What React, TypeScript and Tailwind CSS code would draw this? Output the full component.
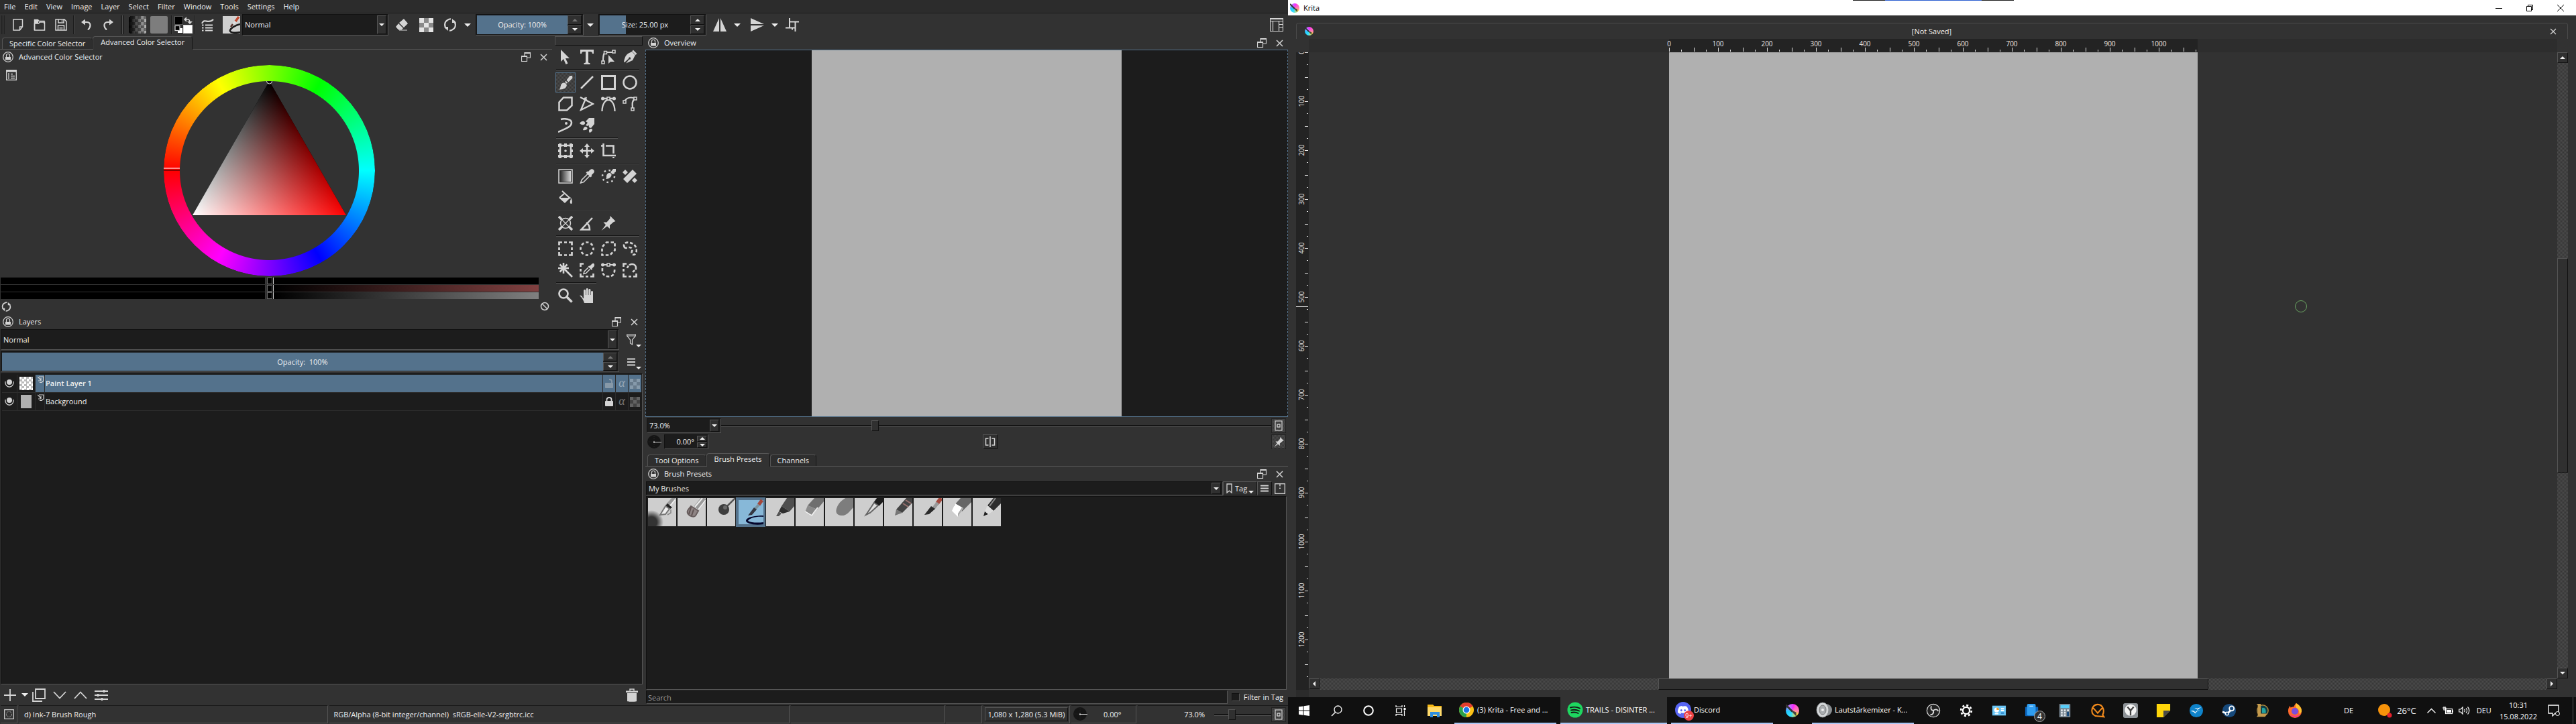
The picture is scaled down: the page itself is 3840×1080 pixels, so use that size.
import type { ReactNode } from "react";
import { SiDiscord } from "react-icons/si";

const cx = (...c: (string | false | undefined)[]) => c.filter(Boolean).join(" ");

const INSET = "border border-t-[#121212] border-l-[#121212] border-r-[#555] border-b-[#555] bg-[#1c1c1c]";
const RAISED = "border border-t-[#555] border-l-[#555] border-r-[#121212] border-b-[#121212] bg-[#303030]";
const HATCH = "bg-[repeating-conic-gradient(#4e4e4e_0_25%,#343434_0_50%)] bg-[length:2px_2px]";
const CHECKER = "bg-[repeating-conic-gradient(#8a8a8a_0_25%,#e4e4e4_0_50%)]";

type SvgProps = { w?: number; h?: number; box?: string; className?: string; children: ReactNode };

const Svg = ({ w = 22, h = w, box = `0 0 ${w} ${h}`, className, children }: SvgProps) => (
  <svg width={w} height={h} viewBox={box} className={cx("shrink-0", className)} fill="none" stroke="#d4d4d4" strokeWidth="2" aria-hidden="true">
    {children}
  </svg>
);

const fill = { fill: "#d4d4d4", stroke: "none" };

/* ---------- toolbox icons ---------- */

const brushShape = (
  <g {...fill}>
    <path d="M21 1h-3.500l-5 6.500 3 3L21.500 4.500z" />
    <path d="M11.500 8.800l2.700 2.700-1.500 1.300-2.600-2.600z" />
    <path d="M9 11.500c2 .2 3.800 2 3.800 4C12 20 7 21.500 1.500 21.500 4 20 3 17 4.500 14c1-1.800 2.600-2.700 4.500-2.500z" />
  </g>
);

const pinShape = <path {...fill} d="M13.500 0l8 8-3 1.200-5.500 4.800v5l-4-3.500-8.500 6.500 6.500-8.500-3.500-4h5l4.800-5.500z" />;

const pipette = (
  <g>
    <path {...fill} d="M21 1.500c1.500 2 .8 4-1 5.500l-2.300 2.200.8 1.200-2 2-7-7 2-2 1.200.8 2.200-2.200c1.800-1.800 4.300-2.300 6.100-.5z" />
    <path d="M12 7.500l-9 9-1.500 4.500 4.500-1.500 9-9" strokeWidth="1.500" />
  </g>
);

const node = (x: number, y: number) => <rect x={x} y={y} width="4" height="4" strokeWidth="1.500" fill="#323232" />;

const toolGroups: { name: string; icon: ReactNode }[][] = [
  [
    { name: "Select Shapes", icon: <path {...fill} d="M4 0v18l4-4 3.500 8 3-1.500-3.500-7.500h6z" /> },
    { name: "Text", icon: <path {...fill} d="M1 0h20v6h-2c0-2-1-3-3-3h-3v15.500c0 1 1 1.500 2.500 1.500v2h-9v-2C8 20 9 19.500 9 18.500V3H6C4 3 3 4 3 6H1z" /> },
    {
      name: "Edit Shapes",
      icon: (
        <>
          <path d="M3 17C3 11 3 5 7 4M9 4h8" />
          {node(1, 17)}
          {node(4.500, 2.500)}
          {node(17, 1)}
          <path {...fill} d="M11 8v13l3-3h6z" />
        </>
      ),
    },
    {
      name: "Calligraphy",
      icon: (
        <>
          <path {...fill} d="M14 3l5 5-4 8-10 4.500 5-6a1.600 1.600 0 1 0-1-1L3 19 2 18C3 12 5 8 8 6z" />
          <path d="M15 1.500l5.500 5.500" strokeWidth="2.500" />
        </>
      ),
    },
  ],
  [
    { name: "Freehand Brush", icon: brushShape },
    { name: "Line", icon: <path d="M2 20L20 2" strokeWidth="2.500" /> },
    { name: "Rectangle", icon: <rect x="1.500" y="1.500" width="19" height="19" strokeWidth="3" /> },
    { name: "Ellipse", icon: <circle cx="11" cy="11" r="9.500" strokeWidth="2.500" /> },
    { name: "Polygon", icon: <path d="M8 1.500h12.500v12L13 20.500H1.500v-12z" strokeWidth="2.500" /> },
    { name: "Polyline", icon: <path d="M1 1l19 10L2 20 10 1M7 2l4 4" strokeWidth="2.300" /> },
    {
      name: "Bezier Curve",
      icon: (
        <>
          <path d="M1.500 22C1.500 12 6 5 11 5s9.500 7 9.500 17M3 3h16" strokeWidth="2.300" />
          <circle {...fill} cx="2.500" cy="3" r="2.500" />
          <circle {...fill} cx="19.500" cy="3" r="2.500" />
          {node(9, 1)}
        </>
      ),
    },
    {
      name: "Freehand Path",
      icon: (
        <>
          <path d="M3 7C6 2 12 0 19 3 13 7 15 12 15 18" strokeWidth="2.300" />
          {node(1, 6)}
          {node(17, 1)}
          {node(13, 17)}
        </>
      ),
    },
    {
      name: "Dynamic Brush",
      icon: (
        <>
          <path d="M4 2c5-1.500 16-1 16 5 0 7-11 9-20 14" strokeWidth="2.500" />
          <circle {...fill} cx="12" cy="8" r="2" />
        </>
      ),
    },
    {
      name: "Multibrush",
      icon: (
        <>
          <path {...fill} d="M22 0h-8L9 5l3 2-3 4 3 1 1.500-1.500L14 14l3 1 5-6z" />
          <path {...fill} d="M0 8c3-4 7-4 8-1s-4 5-8 1zM5 18c1-5 4-6 6-4s-1 5-6 4zM15 22c-2-3-1-6 2-6s3 4-2 6z" />
        </>
      ),
    },
  ],
  [
    {
      name: "Transform",
      icon: (
        <>
          <rect x="3" y="3" width="16" height="16" strokeWidth="2.500" />
          <g {...fill}>
            <path d="M0 1h5v4H0zM17 1h5v4h-5zM0 17h5v4H0zM17 17h5v4h-5zM9 0h4v5H9zM9 17h4v5H9zM0 9h4v4H0zM18 9h4v4h-4zM1 0h4v2H1zM17 0h4v2h-4zM1 20h4v2H1zM17 20h4v2h-4z" />
            <circle cx="11" cy="11" r="1.800" />
          </g>
        </>
      ),
    },
    {
      name: "Move",
      icon: (
        <>
          <path d="M11 2v18M2 11h18" strokeWidth="2.500" />
          <path {...fill} d="M11 0l4 5H7zM11 22l4-5H7zM0 11l5-4v8zM22 11l-5-4v8z" />
        </>
      ),
    },
    { name: "Crop", icon: <path d="M0 3.500h3M3.500 0v18H22M7 3.500h11.500V15M18.500 20v2" strokeWidth="2.600" /> },
  ],
  [
    {
      name: "Gradient",
      icon: (
        <>
          <defs>
            <linearGradient id="toolGrad">
              <stop stopColor="#2a2a2a" />
              <stop offset="1" stopColor="#d8d8d8" />
            </linearGradient>
          </defs>
          <rect x="1" y="1" width="20" height="20" strokeWidth="1.500" />
          <rect x="3" y="3" width="16" height="16" fill="url(#toolGrad)" stroke="none" />
        </>
      ),
    },
    { name: "Color Sampler", icon: pipette },
    {
      name: "Colorize Mask",
      icon: (
        <>
          <path {...fill} d="M22 0h-4l-4 5 3 3 5-4zM13 6c3 1 3 3 2 5-2 3-5 4-8 4 2-2 0-4 2-7 1-1.500 2-2 4-2z" />
          <circle cx="11" cy="11" r="9" strokeWidth="2.500" strokeDasharray="2.500 4.600" />
        </>
      ),
    },
    { name: "Smart Patch", icon: <path {...fill} d="M15 1l6 6L7 21l-6-6zM4 1l4 4-4 4-4-4zM18 13l4 4-4 4-4-4z" /> },
    {
      name: "Fill",
      icon: (
        <>
          <path d="M6 1l12 11M2 11l8-7" strokeWidth="2" />
          <path {...fill} d="M1 11h17l-8 8zM18 10c3 2 4 10 1.500 10S17.500 16 19 13z" />
        </>
      ),
    },
  ],
  [
    {
      name: "Assistants",
      icon: (
        <>
          <circle cx="11" cy="11" r="7.500" strokeWidth="1.500" />
          <path d="M5 5l12 12M17 5L5 17" strokeWidth="1.200" />
          <path d="M1 1l5 5M21 1l-5 5M1 21l5-5M21 21l-5-5" strokeWidth="3.500" />
        </>
      ),
    },
    { name: "Measure", icon: <path d="M19 3L2.500 20.500H15C15 15 13 12 10 10" strokeWidth="2.500" /> },
    { name: "Reference Images", icon: pinShape },
  ],
  [
    { name: "Rectangular Selection", icon: <path d="M1.500 6V1.500H6M9 1.500h4M16 1.500h4.500V6M20.500 9v4M20.500 16v4.500H16M13 20.500H9M6 20.500H1.500V16M1.500 13V9" strokeWidth="2.700" /> },
    { name: "Elliptical Selection", icon: <circle cx="11" cy="11" r="9.500" strokeWidth="2.700" strokeDasharray="4.200 3.260" strokeDashoffset="2" /> },
    { name: "Polygonal Selection", icon: <path d="M8 1.500h12.500v12L13 20.500H1.500v-12z" strokeWidth="2.700" strokeDasharray="4.500 3" strokeDashoffset="1" /> },
    { name: "Freehand Selection", icon: <path d="M3 9C-1 2 8 0 14 3c7 3 8 11 6 14-2 5-8 3-6-2 1-3 0-6-4-6-2 0-6 2-7 0z" strokeWidth="2.700" strokeDasharray="4.500 2.700" /> },
    { name: "Contiguous Selection", icon: <path d="M8 0v16M0 8h16M2.500 2.500l11 11M13.500 2.500l-11 11M10 10l11 11" strokeWidth="2.600" /> },
    {
      name: "Similar Color Selection",
      icon: (
        <>
          <path d="M1.500 6V1.500H6M1.500 13V9M6 20.500H1.500V16M13 20.500H9M16 20.500h4.500V16" strokeWidth="2.700" />
          <path {...fill} d="M21 1c2 2 1 4-.5 5.500l-2 2 .7.8-1.500 1.500-5-5L14.200 4.300l.8.7 2-2c1.500-1.500 2.800-3 4-2z" />
          <path d="M13 7l-6 6-1 3.500 3.500-1 6-6" strokeWidth="1.500" />
        </>
      ),
    },
    {
      name: "Bezier Curve Selection",
      icon: (
        <>
          <path d="M3 3h16" strokeWidth="2" />
          <circle {...fill} cx="2.500" cy="3" r="2.500" />
          <circle {...fill} cx="19.500" cy="3" r="2.500" />
          {node(9, 1)}
          <path d="M2 8c-1 9 3 12.500 9 12.500S21 17 20 8" strokeWidth="2.700" strokeDasharray="4.500 2.800" />
        </>
      ),
    },
    {
      name: "Magnetic Selection",
      icon: (
        <>
          <path d="M6 1.500H1.500V6M1.500 9v4M1.500 16v4.500H6M9 20.500h4M16 20.500h4.500V16" strokeWidth="2.700" />
          <path d="M7 8c2-8 13-8 13 0 0 4-5 4-6 8" strokeWidth="2.600" strokeDasharray="4 1.500 16 1.500 4" />
        </>
      ),
    },
  ],
  [
    {
      name: "Zoom",
      icon: (
        <>
          <circle cx="8" cy="8" r="6.500" strokeWidth="2.700" />
          <path d="M12.500 12.500l8 8" strokeWidth="3.500" />
        </>
      ),
    },
    {
      name: "Pan",
      icon: (
        <path
          {...fill}
          d="M0 11c2-1 4 0 5 4h1V3.500c0-2 3-2 3 0V10h.7V1.500c0-2 3-2 3 0V10h.7V2.500c0-2 3-2 3 0V10h.6V5.500c0-2 3-2 3 0V22H7c-1-4-4-9-7-11z"
        />
      ),
    },
  ],
];

const Toolbox = () => (
  <div className="flex w-[131px] shrink-0 flex-col">
    <div className="mb-px h-3.5 border border-t-[#555] border-l-[#555] border-r-[#121212] border-b-[#121212]" />
    {toolGroups.map((group, g) => (
      <div key={g}>
        {g > 0 && (
          <div className="flex h-1.5 items-center pl-0.5">
            <div
              className={cx(
                "h-0.5 border-t border-b border-t-[#141414] border-b-[#555]",
                group.length === 2 ? "w-[60px]" : group.length === 3 ? "w-[92px]" : "w-[124px]"
              )}
            />
          </div>
        )}
        <div className="flex w-32 flex-wrap">
          {group.map((t) => (
            <button key={t.name} aria-label={t.name} className="flex size-8 items-center justify-center">
              <span className={cx("flex size-[30px] items-center justify-center", t.name === "Freehand Brush" && `border border-[#54728c] ${HATCH}`)}>
                <Svg>{t.icon}</Svg>
              </span>
            </button>
          ))}
        </div>
      </div>
    ))}
  </div>
);

/* ---------- shared widgets ---------- */

const Tri = ({ up, dim, small }: { up?: boolean; dim?: boolean; small?: boolean }) => (
  <svg width={small ? 8 : 10} height={small ? 4 : 5} viewBox="0 0 10 5" className="shrink-0" fill={dim ? "#777" : "#eee"} aria-hidden="true">
    <path d={up ? "M0 5L5 0l5 5z" : "M0 0h10L5 5z"} />
  </svg>
);

const Spin = ({ dimUp, className }: { dimUp?: boolean; className?: string }) => (
  <span className={cx("flex shrink-0 flex-col gap-px bg-[#1c1c1c]", className)}>
    <button aria-label="Increase" className={cx("flex flex-1 items-center justify-center", RAISED)}>
      <Tri up small dim={dimUp} />
    </button>
    <button aria-label="Decrease" className={cx("flex flex-1 items-center justify-center", RAISED)}>
      <Tri small />
    </button>
  </span>
);

const Combo = ({ label, value, className }: { label: string; value: string; className?: string }) => (
  <label className={cx("flex p-px pr-0.5", INSET, className)}>
    <select aria-label={label} className="min-w-0 flex-1 appearance-none bg-transparent pl-0.5 outline-none">
      <option>{value}</option>
    </select>
    <span className={cx("flex w-3.5 items-center justify-center", RAISED)}>
      <Tri small />
    </span>
  </label>
);

const FillSlider = ({ label, value, fillClass, dimUp, className }: { label: string; value: string; fillClass: string; dimUp?: boolean; className?: string }) => (
  <label className={cx("flex p-px pr-0.5", INSET, className)}>
    <input aria-label={label} readOnly value={value} className={cx("min-w-0 flex-1 text-center outline-none", fillClass)} />
    <Spin dimUp={dimUp} className="w-[21px]" />
  </label>
);

const THUMB =
  "appearance-none bg-transparent [&::-webkit-slider-runnable-track]:h-4 [&::-webkit-slider-runnable-track]:bg-[linear-gradient(#141414,#141414),linear-gradient(#555,#555)] [&::-webkit-slider-runnable-track]:bg-[length:100%_2px,100%_1px] [&::-webkit-slider-runnable-track]:bg-[position:0_7px,0_9px] [&::-webkit-slider-runnable-track]:bg-no-repeat [&::-webkit-slider-thumb]:h-4 [&::-webkit-slider-thumb]:w-[11px] [&::-webkit-slider-thumb]:appearance-none [&::-webkit-slider-thumb]:border [&::-webkit-slider-thumb]:border-[#555] [&::-webkit-slider-thumb]:border-r-[#121212] [&::-webkit-slider-thumb]:border-b-[#121212] [&::-webkit-slider-thumb]:bg-[#303030]";

const DockTitle = ({ title }: { title: string }) => (
  <div className="flex h-5 shrink-0 items-center pr-[7px] pl-1">
    <Svg w={16}>
      <circle cx="8" cy="8" r="7.300" strokeWidth="1.200" />
      <path d="M5.500 8V5.500c0-3 5-3 5 0V8" strokeWidth="1.200" />
      <rect {...fill} x="4" y="8" width="8" height="4.500" />
    </Svg>
    <h2 className="ml-2 flex-1">{title}</h2>
    <button aria-label={`Float ${title}`}>
      <Svg w={14}>
        <path d="M5 5V.5h8.500V8H9M5 1.500h8" strokeWidth="1.200" />
        <path d="M.5 5.500h8v8h-8zM.5 6.500h8" strokeWidth="1.200" />
      </Svg>
    </button>
    <button aria-label={`Close ${title}`} className="ml-3.5">
      <Svg w={11}>
        <path d="M1 1l9 9M10 1l-9 9" strokeWidth="1.500" />
      </Svg>
    </button>
  </div>
);

const Tabs = ({ tabs, active }: { tabs: string[]; active: string }) => (
  <div className="mb-px flex h-5 shrink-0 items-end border-b border-[#555] pl-[3px]">
    {tabs.map((t) => (
      <button
        key={t}
        className={cx(
          "rounded-t-sm border border-b-0 border-t-[#555] border-l-[#555] border-r-[#151515]",
          t === active ? "-mb-px h-5 bg-[#323232] px-[11px] pb-1" : "h-[17px] bg-[#2e2e2e] px-[10px]"
        )}
      >
        {t}
      </button>
    ))}
  </div>
);

const Fit = () => (
  <Svg w={12} h={16}>
    <rect x="1" y="1" width="10" height="14" strokeWidth="1.200" />
    <rect x="4" y="6" width="4" height="4" strokeWidth="1.300" />
  </Svg>
);

const Dial = () => (
  <Svg w={21}>
    <circle cx="10" cy="10" r="10" fill="#151515" stroke="none" />
    <path d="M10 2v16M2 10h8" stroke="#333" strokeWidth="1" strokeDasharray="1 2" />
    <path d="M9 10.500h12M10 9v3" strokeWidth="1" />
  </Svg>
);

/* ---------- top bars ---------- */

const menus = ["File", "Edit", "View", "Image", "Layer", "Select", "Filter", "Window", "Tools", "Settings", "Help"];

const Handle = ({ className }: { className?: string }) => (
  <div className={cx("h-7 w-[5px] shrink-0 border-x-2 border-[#222] bg-[#505050]", className)} />
);
const Sep = ({ className }: { className?: string }) => (
  <div className={cx("h-7 w-0.5 shrink-0 border-r border-l border-l-[#1a1a1a] border-r-[#444]", className)} />
);
const Tool = ({ name, className = "w-8", children }: { name: string; className?: string; children: ReactNode }) => (
  <button aria-label={name} className={cx("flex h-8 shrink-0 items-center justify-center", className)}>
    {children}
  </button>
);

const ReloadIcon = ({ w = 20 }: { w?: number }) => (
  <Svg w={w} box="0 0 20 20">
    <path d="M6 3C1 6 1 13 5 16M14 17c5-3 5-10 1-13M11 1.500C8 1 6 3 5 4M9 18.500c3 .5 5-1.500 6-2.500" strokeWidth="2.200" />
    <path {...fill} d="M1 13h6v6zM19 7h-6V1z" />
  </Svg>
);

const Toolbar = () => (
  <div className="flex h-[34px] shrink-0 items-center pl-0.5">
    <Handle />
    <Tool name="New" className="ml-1 w-8">
      <Svg w={16} h={18}>
        <path d="M1 1h13.500v11l-4 5H1zM10.500 17v-5h4" strokeWidth="1.500" />
      </Svg>
    </Tool>
    <Tool name="Open">
      <Svg w={18} h={18}>
        <path d="M1.500 17V1.500h5l1.500 2h8V8" strokeWidth="1.500" />
        <path d="M1.500 17V7h6l2-2h7v12z" strokeWidth="1.500" />
        <path {...fill} d="M1 1h6v6H1z" />
      </Svg>
    </Tool>
    <Tool name="Save">
      <Svg w={18}>
        <path d="M1 1h13l3 3v13H1zM4.500 17v-7h9v7M5 1v5h8V1" strokeWidth="1.500" />
        <path d="M10.500 2v3M6.500 12.500h5M6.500 15h5" strokeWidth="1.200" />
      </Svg>
    </Tool>
    <Sep className="ml-0.5" />
    <Tool name="Undo" className="ml-0.5 w-8">
      <Svg w={16}>
        <path d="M2 4h6c7 0 7 7 2 11.500" strokeWidth="2.200" />
        <path {...fill} d="M0 4l6-4.500v9z" />
      </Svg>
    </Tool>
    <Tool name="Redo">
      <Svg w={16}>
        <path d="M14 4H8C1 4 1 11 6 15.500" strokeWidth="2.200" />
        <path {...fill} d="M16 4L10-.5v9z" />
      </Svg>
    </Tool>
    <Handle className="ml-[3px]" />
    <button aria-label="Gradients" className={cx("ml-[7px] size-[26px] shrink-0 overflow-hidden rounded-xs bg-[length:9px_9px]", CHECKER)}>
      <span className="block size-full bg-linear-to-r from-black to-black/20" />
    </button>
    <button aria-label="Patterns" className="ml-1.5 size-[26px] shrink-0 rounded-xs bg-[#7d7d7d]" />
    <Sep className="ml-[5px]" />
    <button aria-label="Foreground and background color" className="ml-[3px]">
      <Svg w={27} h={26}>
        <rect x="13.500" y="13.500" width="13" height="12" fill="#fff" strokeWidth="1" />
        <rect x=".5" y=".5" width="12" height="12" fill="#000" stroke="#555" strokeWidth="1" />
        <rect x="5" y="18" width="7" height="7" fill="#fff" stroke="none" />
        <rect x="1" y="14.500" width="7" height="7" fill="#000" strokeWidth="1.200" />
        <path d="M16 5h4c2 0 3 1 3 5" strokeWidth="1.500" />
        <path {...fill} d="M14 5l4-4v8zM23 12l-4-4h8z" />
      </Svg>
    </button>
    <Sep className="ml-0.5" />
    <Tool name="Edit brush settings" className="ml-[3px] w-8">
      <Svg w={20} h={19}>
        <path d="M1 7c4-9 9 2 17-6" strokeWidth="2.200" />
        <path d="M1 9.500h2.500M6 9.500h11M1 13.500h2.500M6 13.500h11M1 17.500h2.500M6 17.500h11" strokeWidth="2" />
      </Svg>
    </Tool>
    <button aria-label="Choose brush preset" className="ml-1.5 shrink-0 bg-[#cfcfcf]">
      <Svg w={26}>
        <path d="M26 12c-8 2-14 6-15 9s5 5 15 3" stroke="#1b1b1b" strokeWidth="2.500" />
        <path d="M24 1l-5 7" stroke="#c0492f" strokeWidth="3.500" />
        <path d="M19 8l-4 5" stroke="#ddd" strokeWidth="3" />
        <path d="M15 12l-3 4" stroke="#553028" strokeWidth="2.500" />
      </Svg>
    </button>
    <Combo label="Blending mode" value="Normal" className="ml-[3px] h-8 w-[218px] shrink-0" />
    <Tool name="Eraser mode" className="ml-0.5 w-9">
      <Svg w={20} h={18}>
        <path {...fill} d="M13 0l6 7-6 6-7-7zM5 7l7 7-2.500 2.500H5L1 12z" />
        <path d="M6 17h12" strokeWidth="1" />
      </Svg>
    </Tool>
    <Tool name="Preserve alpha" className="w-9">
      <span className={cx("size-[21px] bg-[length:14px_14px]", CHECKER)} />
    </Tool>
    <Tool name="Reload preset" className="w-9">
      <ReloadIcon />
    </Tool>
    <Tool name="Presets menu" className="w-4">
      <Tri />
    </Tool>
    <FillSlider label="Brush opacity" value="Opacity: 100%" dimUp fillClass="bg-[#54728c]" className="ml-1 h-8 w-[161px] shrink-0" />
    <Tool name="Opacity menu" className="w-5">
      <Tri />
    </Tool>
    <FillSlider
      label="Brush size"
      value="Size: 25.00 px"
      fillClass="bg-[linear-gradient(90deg,#54728c_29%,#1c1c1c_29%)]"
      className="ml-0.5 h-8 w-[161px] shrink-0"
    />
    <Tool name="Horizontal mirror" className="w-10">
      <Svg w={20}>
        <path {...fill} d="M9 0v20H0zM11 0l9 20h-9z" />
      </Svg>
    </Tool>
    <Tool name="Horizontal mirror menu" className="w-3">
      <Tri />
    </Tool>
    <Tool name="Vertical mirror" className="ml-1.5 w-9">
      <Svg w={20}>
        <path {...fill} d="M0 0l20 9H0zM0 11h20L0 20z" />
      </Svg>
    </Tool>
    <Tool name="Vertical mirror menu" className="ml-0.5 w-3">
      <Tri />
    </Tool>
    <Tool name="Wrap around" className="w-10">
      <Svg w={20}>
        <path d="M6 0v14.500M0 14.500h10M10 14.500v3M6 5.500h14M14.500 5.500V20M10 14.500h4" strokeWidth="2" />
      </Svg>
    </Tool>
    <Tool name="Choose workspace" className="mr-[7px] ml-auto w-5">
      <Svg w={20}>
        <path d="M.5 1h19v18.500H.5zM.5 4.500h19M4.500 4.500v15M13.500 4.500v15M13.500 9.500h6M13.500 14.500h6" strokeWidth="1.200" />
        <path {...fill} d="M0 0h20v2H0z" />
      </Svg>
    </Tool>
  </div>
);

/* ---------- color selector ---------- */

const shades = ["bg-black", "bg-[linear-gradient(90deg,#000_51%,#804040)]", "bg-[linear-gradient(90deg,#000_51%,#808080)]"];

const ColorSelector = () => (
  <section className="flex min-w-0 flex-1 flex-col">
    <Tabs tabs={["Specific Color Selector", "Advanced Color Selector"]} active="Advanced Color Selector" />
    <DockTitle title="Advanced Color Selector" />
    <div className="mr-5 grid grid-cols-[1fr_auto_1fr] pt-0.5">
      <button aria-label="Color selector settings" className="mt-[7px] ml-[9px] self-start justify-self-start">
        <Svg w={16}>
          <rect x=".7" y=".7" width="14.600" height="14.600" strokeWidth="1.300" />
          <path d="M1 2h14" strokeWidth="2.500" />
          <path d="M4 5v9M7 6.500h3M7 9.500h6M7 12.500h6" strokeWidth="1.300" />
        </Svg>
      </button>
      <div className="grid size-[315px]">
        <div className="col-start-1 row-start-1 rounded-full bg-[conic-gradient(from_270deg,#f00,#ff0,#0f0,#0ff,#00f,#f0f,#f00)] mask-[radial-gradient(circle,transparent_133px,#000_134px)]" />
        <svg viewBox="0 0 315 315" className="isolate col-start-1 row-start-1" aria-hidden="true">
          <defs>
            <linearGradient id="redUp" x1="0" y1="24" x2="0" y2="224" gradientUnits="userSpaceOnUse">
              <stop stopColor="#000" />
              <stop offset="1" stopColor="#f00" />
            </linearGradient>
            <linearGradient id="whiteIn" x1="43" y1="224" x2="215" y2="124" gradientUnits="userSpaceOnUse">
              <stop stopColor="#0ff" />
              <stop offset="1" stopColor="#000" />
            </linearGradient>
          </defs>
          <path d="M157.500 24L272 224H43z" fill="url(#redUp)" />
          <path d="M157.500 24L272 224H43z" fill="url(#whiteIn)" className="mix-blend-screen" />
          <path d="M153.500 24a4 4 0 0 0 8 0" stroke="#ddd" fill="#111" />
          <path d="M0 154h24" stroke="#ff8c8c" strokeWidth="2" />
          <path d="M0 157h24" stroke="#8c0000" strokeWidth="2" />
        </svg>
      </div>
    </div>
    <div className="mt-0.5 mr-5 ml-px flex flex-col gap-px">
      {shades.map((s) => (
        <div key={s} className={cx("flex h-2.5 justify-center", s)}>
          <span className="w-3 border-x border-[#ccc] px-px">
            <span className="block h-full border border-[#666]" />
          </span>
        </div>
      ))}
    </div>
    <div className="mt-1 flex h-5 items-start justify-between pr-1 pl-0.5">
      <button aria-label="Reload colors">
        <ReloadIcon w={15} />
      </button>
      <button aria-label="Clear color history">
        <Svg w={14}>
          <circle cx="7" cy="7" r="5.500" strokeWidth="1.500" />
          <path d="M3 3l8 8" strokeWidth="1.500" />
        </Svg>
      </button>
    </div>
  </section>
);

/* ---------- layers ---------- */

const layers = [
  { name: "Paint Layer 1", selected: true, locked: false },
  { name: "Background", selected: false, locked: true },
];

const Layers = () => (
  <section className="flex min-h-0 flex-1 flex-col">
    <DockTitle title="Layers" />
    <div className="mt-px flex pl-px">
      <Combo label="Layer blending mode" value="Normal" className="h-[31px] flex-1" />
      <button aria-label="Filter layers" className="flex w-[35px] items-center justify-end pr-0.5">
        <Svg w={14} h={18}>
          <path d="M.7 1h12.600v2L8.500 9v7l-3-2V9L.7 3zM1 3h12" strokeWidth="1.200" />
        </Svg>
        <span className="self-end pb-1">
          <Tri small />
        </span>
      </button>
    </div>
    <div className="mt-0.5 flex pl-px">
      <FillSlider label="Layer opacity" value="Opacity:  100%" dimUp fillClass="bg-[#54728c]" className="h-[31px] flex-1" />
      <button aria-label="Layer options" className="flex w-[35px] items-center justify-end pr-0.5">
        <Svg w={14} h={12}>
          <path d="M1 1.500h12M1 6h12M1 10.500h12" />
        </Svg>
        <span className="self-end pb-1">
          <Tri small />
        </span>
      </button>
    </div>
    <ul className={cx("mt-0.5 ml-px flex-1 p-px", INSET)}>
      {layers.map((l) => (
        <li key={l.name} className="flex h-[27px] items-stretch border-b border-[#2c2c2c]">
          <span className="flex w-[23px] items-center justify-center border-r border-[#2c2c2c]">
            <Svg w={14}>
              <path d="M1 4c-1 11 13 11 12 0" strokeWidth="1.300" />
              <circle {...fill} cx="7" cy="5" r="4" />
            </Svg>
          </span>
          <span className="flex w-[27px] items-center justify-center border-r border-[#2c2c2c]">
            <span className={cx("h-5", l.selected ? "w-5 bg-[repeating-conic-gradient(#bbb_0_25%,#fff_0_50%)] bg-[length:7px_7px]" : "w-4 bg-[#b0b0b0]")} />
          </span>
          <span className={cx("flex flex-1 items-center", l.selected && "bg-[#54728c]")}>
            <span className="h-full w-3.5 border-r border-[#2c2c2c] pt-0.5 pl-[3px]">
              <Svg w={10}>
                <path d="M2 1h7v6L6 9.500H3M0 1l5 5M5 3v4H1" strokeWidth="1.200" />
              </Svg>
            </span>
            <span className={cx("flex-1 pl-px", l.selected && "font-semibold")}>{l.name}</span>
            <button aria-label={`Lock ${l.name}`} className="flex h-full w-[19px] items-center justify-center border-l border-[#2c2c2c]">
              <Svg w={12} h={14} className={l.locked ? "" : "opacity-40"}>
                <rect {...fill} x="0" y="6" width="12" height="8" rx="1" />
                <path d={l.locked ? "M2.500 7V4c0-4 7-4 7 0v3" : "M10 7V4C10 1 8 1 6 1"} strokeWidth="1.800" />
              </Svg>
            </button>
            <button aria-label={`Inherit alpha ${l.name}`} className="h-full w-[19px] border-l border-[#2c2c2c] font-serif text-lg/6 text-white/40 italic">
              α
            </button>
            <button aria-label={`Alpha lock ${l.name}`} className="flex h-full w-5 items-center justify-center border-l border-[#2c2c2c]">
              <span className={cx("size-[15px] bg-[length:10px_10px] opacity-35", CHECKER)} />
            </button>
          </span>
        </li>
      ))}
    </ul>
    <div className="flex h-[31px] shrink-0 items-center gap-[11px] pr-[7px] pl-1.5">
      <div className="flex items-center gap-1.5">
        <button aria-label="Add layer" className="flex items-center gap-2">
          <Svg w={18}>
            <path d="M9 0v18M0 9h18" strokeWidth="1.800" />
          </Svg>
          <Tri />
        </button>
        <button aria-label="Duplicate layer">
          <Svg w={20}>
            <path d="M5 1h14v14H5zM1 5v14h14" strokeWidth="1.800" />
          </Svg>
        </button>
      </div>
      <button aria-label="Move layer down">
        <Svg w={20} h={12}>
          <path d="M1 1l9 9.500L19 1" strokeWidth="1.800" />
        </Svg>
      </button>
      <button aria-label="Move layer up">
        <Svg w={20} h={12}>
          <path d="M1 11l9-9.500L19 11" strokeWidth="1.800" />
        </Svg>
      </button>
      <button aria-label="Layer properties">
        <Svg w={20} h={16}>
          <path d="M0 2h20M0 8h20M0 14h20" strokeWidth="1.800" />
          <path d="M14 0v4M5 6v4M11 12v4" strokeWidth="2.500" />
        </Svg>
      </button>
      <button aria-label="Delete layer" className="ml-auto">
        <Svg w={18} h={20}>
          <path {...fill} d="M2 7h14v12c0 1-14 1-14 0zM0 3.500h18V6H0z" />
          <path d="M6 3.500V1h6v2.500" strokeWidth="1.500" />
        </Svg>
      </button>
    </div>
  </section>
);

/* ---------- overview ---------- */

const Overview = () => (
  <section className="flex flex-col">
    <DockTitle title="Overview" />
    <div className="flex h-[548px] justify-center border border-dashed border-[#54728c] bg-[#1c1c1c] [border-bottom-style:solid] [border-top-style:solid]">
      <div className="w-[462px] bg-[#b0b0b0]" />
    </div>
    <div className="mt-0.5 flex h-[22px] items-center pr-[3px] pl-0.5">
      <Combo label="Overview zoom" value="73.0%" className="h-[22px] w-[111px] shrink-0" />
      <input type="range" aria-label="Overview zoom level" min="0" max="1000" defaultValue="277" className={cx("h-4 min-w-0 flex-1", THUMB)} />
      <button aria-label="Fit page" className={cx("flex size-[22px] items-center justify-center border border-[#222]", HATCH)}>
        <Fit />
      </button>
    </div>
    <div className="mt-0.5 flex h-[22px] items-center pr-[3px] pl-[3px]">
      <Dial />
      <label className={cx("ml-1 flex h-[22px] w-[66px] p-px", INSET)}>
        <input aria-label="Rotation" readOnly value="0.00°" className="min-w-0 flex-1 bg-transparent text-right outline-none" />
        <Spin className="ml-1 w-[15px]" />
      </label>
      <button aria-label="Mirror view" className={cx("mx-auto flex size-[22px] items-center justify-center", RAISED)}>
        <Svg w={16}>
          <path d="M8 0v16M5.500 3H1.500v10h4M10.500 3h4v10h-4" strokeWidth="1.500" />
        </Svg>
      </button>
      <button aria-label="Pin overview controls" className={cx("flex size-[22px] items-center justify-center border border-[#222]", HATCH)}>
        <Svg w={15} box="0 0 22 22">
          {pinShape}
        </Svg>
      </button>
    </div>
  </section>
);

/* ---------- brush presets ---------- */

const presets: { name: string; art: ReactNode }[] = [
  {
    name: "Airbrush Soft",
    art: (
      <>
        <defs>
          <radialGradient id="softDot">
            <stop offset=".45" stopColor="#333" />
            <stop offset="1" stopColor="#333" stopOpacity="0" />
          </radialGradient>
        </defs>
        <circle cx="5" cy="36" r="18" fill="url(#softDot)" />
        <path d="M40 0L28 13" stroke="#999" strokeWidth="7" />
        <path d="M41 2L30 15" stroke="#eee" strokeWidth="2" />
        <path d="M29 8l7 6-6 4-5-5z" fill="#222" />
        <path d="M26 12l6 4-6 8-8 1z" fill="#eee" stroke="#777" />
        <path d="M34 17v5l-5 3" stroke="#888" strokeWidth="1.500" />
      </>
    ),
  },
  {
    name: "Bristles",
    art: (
      <>
        <path d="M40 0L28 15" stroke="#9a9a9a" strokeWidth="9" />
        <path d="M37 0L26 13M42 3L31 17" stroke="#eee" strokeWidth="2" />
        <path d="M20 12l11 7-4 7c-2 3-5 2-9 0-4-3-4-6-2-9z" fill="#8f8585" stroke="#685e5e" />
        <path d="M20 14l-3 10M24 17l-3 9" stroke="#5f5252" />
      </>
    ),
  },
  {
    name: "Blender",
    art: (
      <>
        <path d="M42 0L29 13" stroke="#555" strokeWidth="2.500" />
        <circle cx="25" cy="17" r="8" fill="#3e3e3e" />
        <circle cx="27" cy="14" r="3" fill="#6a6a6a" />
      </>
    ),
  },
  {
    name: "Ink-7 Brush Rough",
    art: (
      <>
        <path d="M40 26c-12 0-24 2-26 7-1 5 12 8 26 6v-3c-8 1-18 1-23-2 2-4 12-7 23-6z" fill="#04052b" />
        <path d="M38 3l-5 7" stroke="#a3473c" strokeWidth="5" />
        <path d="M33 10l-6 7" stroke="#7993a0" strokeWidth="4" />
        <path d="M26 14l4 3-7 8-6 1z" fill="#343843" />
      </>
    ),
  },
  {
    name: "Marker",
    art: (
      <>
        <path d="M31 0h11v12l-7 8-12-8z" fill="#4e4e4e" />
        <path d="M23 12l12 8-10 3-6-3z" fill="#2f2f2f" />
        <path d="M19 20l4 3-4 4h-4z" fill="#555" />
      </>
    ),
  },
  {
    name: "Eraser",
    art: (
      <>
        <path d="M28 0h14v5L32 17 18 11z" fill="#6f6f6f" />
        <path d="M18 11l14 6-8 10-10-6z" fill="#8b8b8b" />
        <path d="M14 20l10 6 9-12" stroke="#eee" />
      </>
    ),
  },
  { name: "Smudge", art: <path d="M30 0h12v14c-6 6-10 13-18 12-8-1-9-6-6-13C21 6 26 3 30 0z" fill="#7d7d7d" /> },
  {
    name: "Technical Pen",
    art: (
      <>
        <path d="M33 0h9v6l-6 6-8-5z" fill="#1c1c1c" />
        <path d="M29 7l6 4-12 11-6 3z" fill="#ddd" stroke="#666" />
      </>
    ),
  },
  {
    name: "Pencil Textured",
    art: (
      <>
        <path d="M33 0h9v7L27 22l-9-5z" fill="#444" />
        <path d="M32 3l8 5M28 8l8 5" stroke="#9b7370" />
        <path d="M18 17l9 5-11 4z" fill="#777" />
      </>
    ),
  },
  {
    name: "Brush Wet",
    art: (
      <>
        <path d="M41 0l-6 8" stroke="#a3473c" strokeWidth="6" />
        <path d="M36 7l-7 9" stroke="#999" strokeWidth="5" />
        <path d="M26 12l6 4-9 8-7 1z" fill="#2a2a2a" />
      </>
    ),
  },
  {
    name: "Eraser Hard",
    art: (
      <>
        <path d="M26 0h16v6L28 20 16 11z" fill="#666" />
        <path d="M18 8l12 7-8 13-9-9z" fill="#fff" />
        <path d="M30 15l-8 13v-5l6-9z" fill="#aaa" />
      </>
    ),
  },
  {
    name: "Pencil Large",
    art: (
      <>
        <path d="M31 0h11v8L31 19l-9-8z" fill="#2c2c2c" />
        <path d="M34 0L25 12" stroke="#888" strokeWidth="2" />
        <path d="M22 11l9 8-12 8-3-2z" fill="#ddd" />
        <path d="M18 20l5 4-7 3z" fill="#222" />
      </>
    ),
  },
];

const BrushPresets = () => (
  <section className="mt-1.5 flex min-h-0 flex-1 flex-col">
    <Tabs tabs={["Tool Options", "Brush Presets", "Channels"]} active="Brush Presets" />
    <DockTitle title="Brush Presets" />
    <div className="mt-px flex h-[21px] items-center pr-0.5 pl-px">
      <Combo label="Preset tag" value="My Brushes" className="h-[21px] flex-1" />
      <button className={cx("flex h-[21px] w-[51px] items-center gap-1 pl-1", RAISED)}>
        <Svg w={9} h={15}>
          <path d="M1 1h7v13L4.500 11 1 14z" strokeWidth="1.300" />
        </Svg>
        Tag
        <span className="-ml-0.5 self-end pb-0.5">
          <Tri small />
        </span>
      </button>
      <button aria-label="Display settings" className={cx("flex h-[21px] w-[22px] items-center justify-center", RAISED)}>
        <Svg w={12} h={11}>
          <path d="M0 1.500h12M0 5.500h12M0 9.500h12" />
        </Svg>
      </button>
      <button aria-label="Storage resources" className="mr-0.5 ml-1">
        <Svg w={16}>
          <rect x=".7" y=".7" width="14.600" height="14.600" strokeWidth="1.300" />
          <path d="M8 1v8" strokeDasharray="1 1" />
        </Svg>
      </button>
    </div>
    <div className={cx("mt-px mr-0.5 ml-px flex flex-1 content-start items-start p-px", INSET)}>
      {presets.map((p) => {
        const on = p.name === "Ink-7 Brush Rough";
        return (
          <button key={p.name} aria-label={p.name} className={cx("border", on ? "border-[#54728c] bg-[#54728c]" : "border-[#1c1c1c] bg-[#cecece]")}>
            <Svg w={42}>
              {on && <rect x="3" y="3" width="37" height="36" fill="#87b8d8" stroke="none" />}
              <g stroke="none">{p.art}</g>
            </Svg>
          </button>
        );
      })}
    </div>
    <div className="mt-px flex h-[22px] items-start pl-px">
      <input type="search" placeholder="Search" aria-label="Search presets" className={cx("h-5 min-w-0 flex-1 pl-0.5 outline-none placeholder:text-[#999]", INSET)} />
      <label className="flex h-5 items-center gap-1.5 pr-[7px] pl-1.5">
        <input type="checkbox" className={cx("size-3 appearance-none", INSET)} />
        Filter in Tag
      </label>
    </div>
  </section>
);

/* ---------- status bar ---------- */

const CELL = "flex items-center border-r border-b border-[#555] border-t border-t-[#1a1a1a]";

const StatusBar = () => (
  <footer className="flex h-[28px] shrink-0 gap-0.5 pb-px pl-px">
    <button aria-label="Selection display" className={cx(CELL, "w-[25px] justify-center")}>
      <Svg w={15}>
        <rect x=".7" y=".7" width="13.600" height="13.600" strokeWidth="1.200" />
        <circle cx="7.500" cy="7.500" r="4" strokeWidth="1" strokeDasharray="1 1" />
      </Svg>
    </button>
    <div className={cx(CELL, "flex-[2] pl-2")}>d) Ink-7 Brush Rough</div>
    <div className={cx(CELL, "flex-[3] pl-1.5")}>RGB/Alpha (8-bit integer/channel)&nbsp; sRGB-elle-V2-srgbtrc.icc</div>
    <div className={cx(CELL, "w-[229px]")} />
    <div className={cx(CELL, "w-[54px]")} />
    <div className={cx(CELL, "w-[129px] p-0.5")}>
      <button className={cx("h-full w-full whitespace-nowrap", RAISED)}>1,080 x 1,280 (5.3 MiB)</button>
    </div>
    <div className={cx(CELL, "w-[97px] gap-6 pl-[3px]")}>
      <Dial />
      <span>0.00°</span>
    </div>
    <div className="flex w-[224px] items-center border-t border-[#1a1a1a] pr-[3px]">
      <label htmlFor="zoom" className="w-[100px] text-right">
        73.0%
      </label>
      <input id="zoom" type="range" min="0" max="1000" defaultValue="290" className={cx("ml-3.5 h-4 min-w-0 flex-1", THUMB)} />
      <button aria-label="Fit page" className={cx("flex size-[22px] items-center justify-center border border-[#222]", HATCH)}>
        <Fit />
      </button>
    </div>
  </footer>
);

/* ---------- document window ---------- */

const KritaIcon = ({ w = 14 }: { w?: number }) => (
  <span className="grid shrink-0">
    <span className="col-start-1 row-start-1 rounded-full bg-[conic-gradient(from_20deg,#f4d,#f8a_80deg,#fd3_110deg,#3df_180deg,#2cf_240deg,#a8f_290deg,#f2f)]" />
    <Svg w={w} box="0 0 14 14" className="col-start-1 row-start-1">
      <path d="M0 1l7 7" stroke="#333" strokeWidth="2" />
      <path d="M7 7l4 2v4l-4-4z" fill="#444" stroke="none" />
    </Svg>
  </span>
);

const SCALE = 0.73;
const range = (to: number, step: number) => Array.from({ length: Math.floor(to / step) + 1 }, (_, i) => i * step);

const HorizontalRuler = () => (
  <svg width="788" height="20" className="overflow-visible bg-[#232323] text-[10px]" fill="#e8e8e8" aria-hidden="true">
    {range(1080, 25).map((v) => (
      <rect key={v} x={Math.round(v * SCALE)} y={v % 50 ? 16 : 13} width="1" height={v % 50 ? 3 : 6} />
    ))}
    {range(1080, 100).map((v) => (
      <text key={v} x={v * SCALE} y="11" textAnchor="middle">
        {v}
      </text>
    ))}
  </svg>
);

const VerticalRuler = () => (
  <svg width="19" height="100%" className="shrink-0 overflow-hidden bg-[#232323] text-[10px]" fill="#e8e8e8" aria-hidden="true">
    {range(1275, 25).map((v) => (
      <rect key={v} x={v % 50 ? 16 : 13} y={Math.round(v * SCALE)} width={v % 50 ? 2 : 5} height="1" />
    ))}
    {range(1275, 100).map((v) => (
      <text key={v} transform={`translate(12 ${v * SCALE}) rotate(-90)`} textAnchor="middle">
        {v}
      </text>
    ))}
    <rect x="0" y="379" width="18" height="1" />
  </svg>
);

const ScrollArrow = ({ name, d }: { name: string; d: string }) => (
  <button aria-label={name} className={cx("flex size-4 shrink-0 items-center justify-center", RAISED)}>
    <Svg w={8}>
      <path d={d} fill="#eee" stroke="none" />
    </Svg>
  </button>
);

const DocumentWindow = () => (
  <main className="flex min-h-0 flex-1 flex-col bg-[#323232]">
    <header className="flex h-[23px] shrink-0 bg-white text-black">
      <div className="flex flex-1 items-center gap-1.5 pl-[3px]">
        <KritaIcon />
        Krita
      </div>
      <div className="flex h-px w-60 justify-center bg-[#1c1c1c]">
        <span className="w-36 bg-[#2c5fd0]" />
      </div>
      <div className="flex flex-1 items-center justify-end text-black">
        <button aria-label="Minimize" className="flex w-[46px] justify-center">
          <Svg w={10}>
            <path d="M0 5.500h10" stroke="#000" strokeWidth="1" />
          </Svg>
        </button>
        <button aria-label="Restore" className="flex w-[46px] justify-center">
          <Svg w={10}>
            <path d="M.5 2.500h7v7h-7zM2.500 2.500v-2h7v7h-2" stroke="#000" strokeWidth="1" />
          </Svg>
        </button>
        <button aria-label="Close window" className="flex w-[46px] justify-center">
          <Svg w={10}>
            <path d="M0 0l10 10M10 0L0 10" stroke="#000" strokeWidth="1" />
          </Svg>
        </button>
      </div>
    </header>
    <div className="flex min-h-0 flex-1 flex-col px-3 pt-[11px] pb-[11px]">
      <div className="flex h-6 shrink-0 items-center rounded-t-sm border border-b-0 border-[#4a4a4a] px-3">
        <KritaIcon w={13} />
        <h1 className="flex-1 text-center">[Not Saved]</h1>
        <button aria-label="Close document" className="pr-1">
          <Svg w={10}>
            <path d="M1 1l8 8M9 1L1 9" strokeWidth="1.200" />
          </Svg>
        </button>
      </div>
      <div className="flex min-h-0 flex-1">
        <div className="flex w-[19px] shrink-0 flex-col pt-5">
          <VerticalRuler />
          <div className="h-[15px] shrink-0 bg-[#2b2b2b]" />
        </div>
        <div className="flex min-w-0 flex-1 flex-col">
          <div className="flex h-5 shrink-0 justify-center bg-[#2d2d2d]">
            <HorizontalRuler />
          </div>
          <div className="relative flex flex-1 justify-center">
            <div className="w-[788px] bg-[#b0b0b0]" />
            {/* brush cursor */}
            <div className="absolute top-[370px] right-[373px] size-[18px] rounded-full border border-[#6aa562]" />
          </div>
          <div className="flex h-[17px] shrink-0">
            <ScrollArrow name="Scroll left" d="M6 0v8L2 4z" />
            <div className={cx("flex flex-1 justify-center", HATCH)}>
              <div className={cx("h-full w-[820px]", RAISED)} />
            </div>
            <ScrollArrow name="Scroll right" d="M2 0v8l4-4z" />
          </div>
        </div>
        <div className="mt-5 mb-[17px] flex w-4 shrink-0 flex-col">
          <ScrollArrow name="Scroll up" d="M0 6h8L4 2z" />
          <div className={cx("flex flex-1 flex-col justify-center", HATCH)}>
            <div className={cx("h-[320px]", RAISED)} />
          </div>
          <ScrollArrow name="Scroll down" d="M0 2h8L4 6z" />
        </div>
      </div>
    </div>
  </main>
);

/* ---------- taskbar ---------- */

const SpeakerIcon = (
  <>
    <circle cx="15" cy="12" r="9" fill="#8b8f92" stroke="none" />
    <ellipse cx="10" cy="12" rx="9" ry="11" fill="#d5d8da" stroke="#8d9193" strokeWidth="1" />
    <ellipse cx="10" cy="12" rx="5" ry="7" fill="#a9adb0" stroke="#777" strokeWidth="1" />
    <circle cx="10" cy="12" r="2" fill="#eee" stroke="none" />
  </>
);

const windows: { title: string; active?: boolean; icon: ReactNode }[] = [
  {
    title: "(3) Krita - Free and ...",
    icon: (
      <>
        <circle cx="12" cy="12" r="11" fill="#fbc116" stroke="none" />
        <path d="M12 12L2.500 6.500A11 11 0 0 1 21.500 6.500z" fill="#e33b2e" stroke="none" />
        <path d="M12 12L2.500 6.500A11 11 0 0 0 12 23z" fill="#2aa14c" stroke="none" />
        <circle cx="12" cy="12" r="5.500" fill="#fff" stroke="none" />
        <circle cx="12" cy="12" r="4.300" fill="#1a73e8" stroke="none" />
      </>
    ),
  },
  {
    title: "TRAILS - DISINTER ...",
    active: true,
    icon: (
      <>
        <circle cx="12" cy="12" r="11.500" fill="#1ed760" stroke="none" />
        <path d="M5 8.500c5-1.500 10-1 14 1.200M6 12.300c4-1 8.500-.6 12 1.200M6.500 16c3.500-.8 7-.5 10 1" stroke="#151515" strokeWidth="1.900" strokeLinecap="round" />
      </>
    ),
  },
];

const TaskWindow = ({ title, active, width, children }: { title: string; active?: boolean; width: string; children: ReactNode }) => (
  <button className={cx("flex h-10 shrink-0 items-center gap-1 border-b-2 border-[#aac6f4] whitespace-nowrap", width, active ? "bg-[#323232] pl-2.5" : "pl-1.5")}>
    {children}
    <span>{title}</span>
  </button>
);

const trayApps: { name: string; art: ReactNode }[] = [
  {
    name: "OBS",
    art: (
      <>
        <circle cx="12" cy="12" r="10.500" fill="#222" stroke="#ddd" strokeWidth="1.300" />
        <path d="M12 12c-4-1-5-4-3-7M12 12c3-3 7-2 8 1M12 12c1 4-1 7-5 7" stroke="#ddd" strokeWidth="2" />
      </>
    ),
  },
  {
    name: "Settings",
    art: (
      <>
        <circle cx="12" cy="12" r="5.500" stroke="#fff" strokeWidth="2.500" />
        <circle cx="12" cy="12" r="8.500" stroke="#fff" strokeWidth="3" strokeDasharray="3.300 3.370" />
      </>
    ),
  },
  {
    name: "Control Panel",
    art: (
      <>
        <rect x="1" y="4" width="22" height="16" fill="#6cc6f5" stroke="none" />
        <circle cx="8" cy="11" r="4" fill="#fff" stroke="none" />
        <path d="M8 11V7a4 4 0 0 1 4 4z" fill="#f4a12c" stroke="none" />
        <path d="M15 9h5M15 12h5M5 17h6" stroke="#fff" />
        <path d="M15 16h5" stroke="#1a73c0" />
      </>
    ),
  },
  {
    name: "Your Phone",
    art: (
      <>
        <rect x="1" y="6" width="21" height="15" rx="1" fill="#0b62b8" stroke="none" />
        <rect x="4" y="1" width="14" height="19" rx="2" fill="#2f9df0" stroke="none" />
        <rect x="8" y="4" width="6" height="1.500" fill="#bfe3ff" stroke="none" />
      </>
    ),
  },
  {
    name: "Calculator",
    art: (
      <>
        <rect x="3" y="1" width="18" height="22" rx="1" fill="#76838e" stroke="none" />
        <rect x="5" y="3" width="14" height="5" fill="#58cdfa" stroke="none" />
        <path d="M5.500 11.500h3M10.500 11.500h3M5.500 15.500h3M10.500 15.500h3M5.500 19.500h3M10.500 19.500h3M15.500 11.500h3" stroke="#dfe5ea" strokeWidth="3" />
        <path d="M17 14v7" stroke="#13487c" strokeWidth="3" />
      </>
    ),
  },
  {
    name: "Mail client",
    art: (
      <path d="M12 2c-6 0-9.500 5-9.500 10S6 21 11 21l11 1-2-3c2-4 2-8 .5-11C19 4 16 2 12 2zM4 7l8 9 8-9" stroke="#f28a1c" strokeWidth="2.300" />
    ),
  },
  {
    name: "Time tracker",
    art: (
      <>
        <rect x="0" y="0" width="24" height="24" rx="3" fill="#8d9297" stroke="none" />
        <circle cx="12" cy="11" r="9.500" fill="#f4f4f4" stroke="none" />
        <path d="M7 6l5 6 5-6M12 12v8" stroke="#444" strokeWidth="2.500" />
      </>
    ),
  },
  {
    name: "Sticky Notes",
    art: (
      <>
        <path d="M1 1h22v11l-11 11H1z" fill="#ffd60a" stroke="none" />
        <path d="M12 12h11L12 23z" fill="#4a4a4a" stroke="none" />
      </>
    ),
  },
  {
    name: "OpenOffice",
    art: (
      <>
        <circle cx="12" cy="12" r="11" fill="#0f83ca" stroke="none" />
        <path d="M3 13c3-2 6-1 7 2 2-3 5-4 8-3-4 0-6 2-8 5-1-3-4-4-7-4zM9 8c2-1 4 0 5 1 1-2 4-2 6-2-3 1-4 2-6 4-1-2-3-3-5-3z" fill="#fff" stroke="none" />
      </>
    ),
  },
  {
    name: "Steam",
    art: (
      <>
        <circle cx="12" cy="12" r="11" fill="#174a7c" stroke="none" />
        <path d="M1 14l8 3M9 17l7-7" stroke="#fff" strokeWidth="3" />
        <circle cx="16" cy="8.500" r="3.800" fill="#174a7c" stroke="#fff" strokeWidth="2" />
        <circle cx="8.500" cy="17" r="2.500" fill="#174a7c" stroke="#fff" strokeWidth="1.500" />
      </>
    ),
  },
  {
    name: "League of Legends",
    art: (
      <>
        <circle cx="13" cy="12" r="9" fill="#0d3c46" stroke="#b98b3c" strokeWidth="1.500" />
        <path d="M3 1h7v16h10l-3 5H3l2-2V3z" fill="#c49a4c" stroke="none" />
        <path d="M12 8c4-2 7 2 6 8h-6z" fill="#23a3a0" stroke="none" />
      </>
    ),
  },
  {
    name: "Firefox",
    art: (
      <>
        <path d="M14 0c5 3 9 7 9 13a11 11 0 0 1-22 0c0-4 1-6 3-9l1 3c2-1 3-1 5-1 1-2 2-4 4-6z" fill="#ff6a2b" stroke="none" />
        <path d="M14 0c5 3 9 7 9 13-1 3-3 4-4 4 1-6-3-8-5-10-1-2-1-5 0-7z" fill="#ffc22e" stroke="none" />
        <path d="M3 17c4 7 14 8 18 1-5 3-13 4-18-1z" fill="#f5308c" stroke="none" />
        <circle cx="12" cy="13" r="5.500" fill="#7a4ddb" stroke="none" />
      </>
    ),
  },
];

const Taskbar = () => (
  <nav aria-label="Taskbar" className="flex h-10 shrink-0 items-center bg-[#101010] text-white">
    <button aria-label="Start" className="flex w-12 justify-center">
      <Svg w={16}>
        <path d="M0 2.300l6.500-.9v6.200H0zM7.500 1.200L16 0v7.600H7.500zM0 8.500h6.500v6.200L0 13.800zM7.500 8.500H16V16l-8.500-1.200z" fill="#fff" stroke="none" />
      </Svg>
    </button>
    <button aria-label="Search" className="flex w-12 justify-center">
      <Svg w={17}>
        <circle cx="10.500" cy="6.500" r="5.500" stroke="#fff" strokeWidth="1.300" />
        <path d="M6.500 10.500L1 16" stroke="#fff" strokeWidth="1.500" />
      </Svg>
    </button>
    <button aria-label="Cortana" className="flex w-12 justify-center">
      <Svg w={16}>
        <circle cx="8" cy="8" r="6.800" stroke="#fff" />
      </Svg>
    </button>
    <button aria-label="Task View" className="flex w-12 justify-center">
      <Svg w={16}>
        <path d="M1 0v2.500h9V0M1 16v-2.500h9V16M1.500 5h8v6h-8zM13.500 0v3M13.500 7.500V16" stroke="#fff" strokeWidth="1.200" />
        <rect x="12.500" y="4" width="3" height="3" fill="#fff" stroke="none" />
      </Svg>
    </button>
    <button aria-label="File Explorer" className="flex w-[54px] justify-center">
      <Svg w={22} h={20}>
        <path d="M0 1h8l2 2h11v15H0z" fill="#f7b916" stroke="none" />
        <path d="M0 5h21v13H0z" fill="#ffda6b" stroke="none" />
        <path d="M4 20v-8h14v8h-4v-4H8v4z" fill="#2f8ee0" stroke="none" />
      </Svg>
    </button>
    <div className="flex gap-1.5 pl-0.5">
      {windows.map((w) => (
        <TaskWindow key={w.title} title={w.title} active={w.active} width={w.active ? "w-[159px]" : "w-[152px]"}>
          <Svg w={24}>{w.icon}</Svg>
        </TaskWindow>
      ))}
      <TaskWindow title="Discord" width="w-[152px]">
        <span className="relative flex size-6 items-center justify-center rounded-full bg-[#5865f2]">
          <SiDiscord className="size-4 text-white" />
          <span className="absolute -right-1 -bottom-1 flex size-[15px] items-center justify-center rounded-full bg-[#ed4245] text-[9px]">9+</span>
        </span>
      </TaskWindow>
    </div>
    <button aria-label="Krita" className="flex w-[58px] justify-center">
      <KritaIcon w={20} />
    </button>
    <TaskWindow title="Lautstärkemixer - K..." width="w-[152px]">
      <Svg w={24}>{SpeakerIcon}</Svg>
    </TaskWindow>
    <div className="ml-1 flex">
      {trayApps.map((a) => (
        <button key={a.name} aria-label={a.name} className="relative flex w-[49px] justify-center">
          <Svg w={22} box="0 0 24 24">
            {a.art}
          </Svg>
          {a.name === "Your Phone" && (
            <span className="absolute right-1 -bottom-1.5 flex size-[17px] items-center justify-center rounded-full border border-[#aaa] bg-[#333] text-xs/4">4</span>
          )}
        </button>
      ))}
    </div>
    <div className="ml-auto flex items-center">
      <span className="mr-9">DE</span>
      <Svg w={22}>
        <circle cx="10" cy="10" r="9" fill="#f7930a" stroke="none" />
        <circle cx="18" cy="18" r="3.500" fill="#e5202c" stroke="none" />
      </Svg>
      <span className="ml-[7px] text-[13px]">26°C</span>
      <button aria-label="Show hidden icons" className="ml-4">
        <Svg w={13} h={8}>
          <path d="M.5 7.500l6-6 6 6" stroke="#fff" strokeWidth="1.300" />
        </Svg>
      </button>
      <Svg w={16} className="ml-2.5">
        <rect x="4.500" y="5.500" width="10" height="7" stroke="#fff" strokeWidth="1.200" />
        <rect x="6" y="7" width="7" height="4" fill="#fff" stroke="none" />
        <path d="M15.500 7.500v3M0 4h5v3H2V2M4 2v3" stroke="#fff" strokeWidth="1.200" />
      </Svg>
      <Svg w={17} h={14} className="ml-2">
        <path d="M.7 5v4h2.500L6 12V2L3.200 5z" stroke="#fff" strokeWidth="1.200" />
        <path d="M8.500 5c1 1 1 3 0 4M11 3.500c2 2 2 5 0 7M13.500 1.500c3 3 3 8 0 11" stroke="#fff" strokeWidth="1.200" />
      </Svg>
      <span className="ml-2.5">DEU</span>
      <time className="ml-3 flex flex-col text-center leading-[17px]">
        <span>10:31</span>
        <span>15.08.2022</span>
      </time>
      <button aria-label="Notifications" className="ml-4">
        <Svg w={18}>
          <path d="M1 1h15v12h-5l-4 4v-4H1z" stroke="#fff" strokeWidth="1.300" />
          <circle cx="14.500" cy="13.500" r="3" fill="#101010" stroke="#fff" strokeWidth="1" />
        </Svg>
      </button>
      <span className="mr-1 ml-[19px] h-10 w-px bg-[#555]" />
    </div>
  </nav>
);

const App = () => (
  <div className="flex h-screen bg-[#323232] font-['Open_Sans',sans-serif] text-[11px]/[16px] text-[#f0f0f0]">
    <div className="flex min-w-0 flex-1 flex-col">
      <nav aria-label="Main menu" className="flex h-5 shrink-0 items-center gap-[13px] border-b border-[#1c1c1c] bg-[#2c2c2c] pl-1.5">
        {menus.map((m) => (
          <button key={m}>{m}</button>
        ))}
      </nav>
      <Toolbar />
      <div className="flex min-h-0 flex-1 gap-1">
        <div className="flex min-w-0 flex-1 flex-col">
          <div className="flex gap-1">
            <ColorSelector />
            <Toolbox />
          </div>
          <Layers />
        </div>
        <div className="flex min-w-0 flex-1 flex-col">
          <Overview />
          <BrushPresets />
        </div>
      </div>
      <StatusBar />
    </div>
    <div className="flex min-w-0 flex-1 flex-col">
      <DocumentWindow />
      <Taskbar />
    </div>
  </div>
);

export default App;
